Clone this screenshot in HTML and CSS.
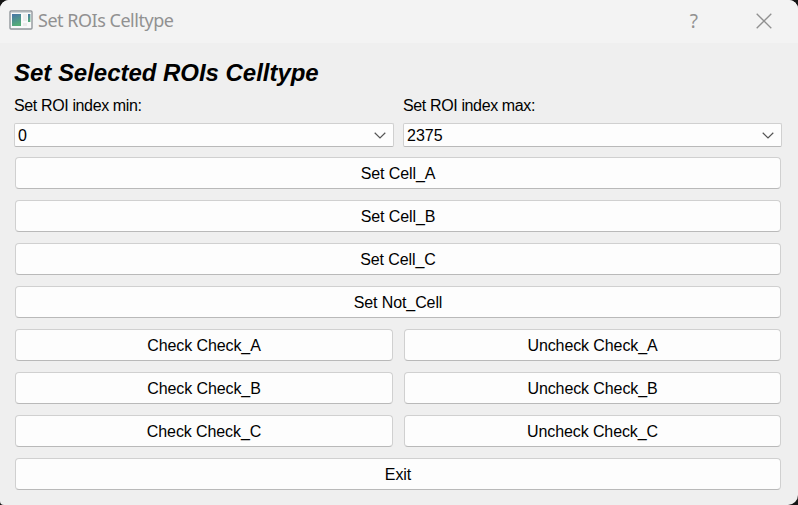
FILE: index.html
```html
<!DOCTYPE html>
<html lang="en">
<head>
<meta charset="utf-8">
<title>Set ROIs Celltype</title>
<link rel="stylesheet" href="styles.css">
</head>
<body>
<main class="window">
  <header class="titlebar">
    <svg class="app-icon" width="24" height="20" viewBox="0 0 24 20">
      <defs>
        <linearGradient id="pane" x1="0" y1="0" x2=".3" y2="1"><stop offset="0" stop-color="#4773a8"/><stop offset="1" stop-color="#55ad78"/></linearGradient>
      </defs>
      <rect x="1" y="1" width="22" height="18" rx="1" fill="#fafafa" stroke="#91969b" stroke-width="1.4"/>
      <path d="M2 2.3h20" stroke="#c9cdd1"/>
      <rect x="3" y="4" width="9" height="12" fill="url(#pane)"/>
      <rect x="14" y="4" width="4" height="7" fill="#ededed"/>
      <rect x="19" y="4" width="2.4" height="8" fill="url(#pane)"/>
      <rect x="14" y="13" width="4" height="3" fill="#ebebeb"/>
    </svg>
    <span class="caption">Set ROIs Celltype</span>
    <span class="help">?</span>
    <svg class="close" width="16" height="16" viewBox="0 0 16 16"><path d="M.7 .7l14.6 14.6M15.3 .7L.7 15.3" fill="none" stroke="#909090" stroke-width="1.3"/></svg>
  </header>
  <section class="content">
    <h1 class="heading">Set Selected ROIs Celltype</h1>
    <div class="fields">
      <div class="field">
        <span class="label">Set ROI index min:</span>
        <div class="combo"><span>0</span><svg width="12" height="7" viewBox="0 0 12 7"><path d="M.7 .7L6 5.9 11.3 .7" fill="none" stroke="#555" stroke-width="1.2"/></svg></div>
      </div>
      <div class="field">
        <span class="label">Set ROI index max:</span>
        <div class="combo"><span>2375</span><svg width="12" height="7" viewBox="0 0 12 7"><path d="M.7 .7L6 5.9 11.3 .7" fill="none" stroke="#555" stroke-width="1.2"/></svg></div>
      </div>
    </div>
    <div class="buttons">
      <button class="btn wide">Set Cell_A</button>
      <button class="btn wide">Set Cell_B</button>
      <button class="btn wide">Set Cell_C</button>
      <button class="btn wide">Set Not_Cell</button>
      <button class="btn">Check Check_A</button>
      <button class="btn">Uncheck Check_A</button>
      <button class="btn">Check Check_B</button>
      <button class="btn">Uncheck Check_B</button>
      <button class="btn">Check Check_C</button>
      <button class="btn">Uncheck Check_C</button>
      <button class="btn wide">Exit</button>
    </div>
  </section>
</main>
</body>
</html>
```
FILE: styles.css
```css
* { box-sizing: border-box; }
body {
  margin: 0;
  background: #151515;
  font: 16px/20px "Liberation Sans", Arial, sans-serif;
  color: #000;
}
.window {
  width: 798px;
  height: 505px;
  overflow: hidden;
  background: #efefef;
  border-radius: 9px 9px 10px 4px;
}
.titlebar {
  display: flex;
  align-items: center;
  height: 43px;
  padding: 0 26px 3px 9px;
  background: #f3f3f3;
  color: #919191;
  font: 18px/24px "Noto Sans", "Open Sans", sans-serif;
}
.caption {
  margin-left: 5px;
  letter-spacing: -0.48px;
}
.help {
  margin-left: auto;
  margin-right: 58px;
  padding-top: 1px;
  font-size: 19px;
}
.close { margin-top: 1px; }
.content { padding: 15px 16px 0 14px; }
.heading {
  margin: 0;
  height: 31px;
  font-size: 24px;
  font-style: italic;
  font-weight: bold;
  line-height: 30px;
  letter-spacing: -0.03px;
}
.fields {
  display: grid;
  grid-template-columns: 380px 379px;
  gap: 9px;
}
.label {
  display: block;
  height: 34px;
  padding-top: 7px;
  letter-spacing: -0.37px;
}
.combo {
  display: flex;
  align-items: center;
  justify-content: space-between;
  height: 24px;
  padding: 0 7px 0 3px;
  background: #fdfdfd;
  border: 1px solid #d0d0d0;
  border-bottom-color: #b9b9b9;
  border-radius: 2px;
}
.combo span { padding-top: 2px; }
.buttons {
  display: grid;
  grid-template-columns: 378px 377px;
  gap: 11px;
  padding: 10px 1px 0;
}
.btn {
  height: 32px;
  padding: 2px 0 0;
  background: #fdfdfd;
  border: 1px solid #d0d0d0;
  border-bottom-color: #b9b9b9;
  border-radius: 4px;
  font: inherit;
  letter-spacing: -0.1px;
  color: inherit;
}
.wide { grid-column: span 2; }
```
